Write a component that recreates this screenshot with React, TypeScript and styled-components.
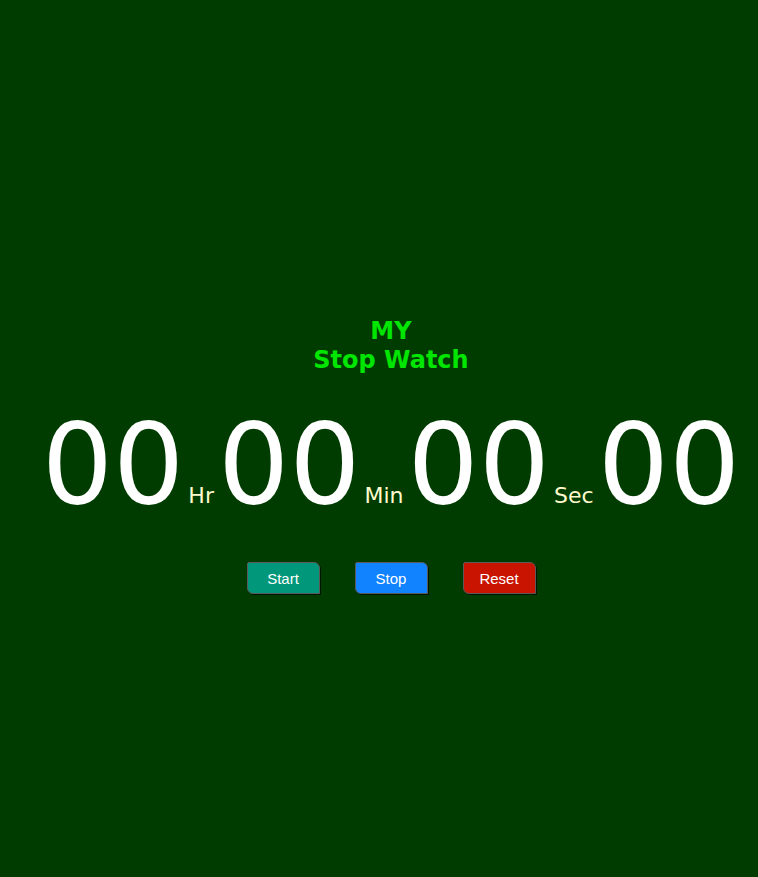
import React from "react";
import styled, { createGlobalStyle } from "styled-components";

const Global = createGlobalStyle`
  html, body {
    margin: 0;
    padding: 0;
    background: #003c00;
  }
  body {
    min-height: 877px;
    overflow: hidden;
  }
`;

const Page = styled.main`
  box-sizing: border-box;
  width: 100%;
  min-height: 877px;
  padding: 317px 0 0 24px;
  display: flex;
  flex-direction: column;
  align-items: center;
  font-family: "DejaVu Sans", Verdana, sans-serif;
`;

const Title = styled.h1`
  margin: 0;
  font-size: 24px;
  font-weight: bold;
  line-height: 29px;
  color: #00e600;
  text-align: center;
`;

const Display = styled.div`
  margin-top: 33px;
  display: flex;
  align-items: baseline;
  white-space: nowrap;
  line-height: 1;
`;

const Digits = styled.span`
  font-size: 112px;
  line-height: 1;
  color: #ffffff;
`;

const Unit = styled.span`
  font-size: 22px;
  line-height: 1;
  color: #fffacd;
  margin: 0 4px;
`;

const Controls = styled.div`
  margin-top: 42px;
  display: flex;
  gap: 35px;
`;

const Button = styled.button<{ $bg: string }>`
  width: 73px;
  height: 32px;
  padding: 0;
  background: ${(p) => p.$bg};
  color: #ffffff;
  font-family: "Liberation Sans", Arial, sans-serif;
  font-size: 15px;
  border: 1px solid #5a5a5a;
  border-radius: 2px 6px 0 6px;
  box-shadow: 1px 1px 0 #001500;
  cursor: pointer;
`;

export default function App() {
  return (
    <>
      <Global />
      <Page>
        <Title>
          MY
          <br />
          Stop Watch
        </Title>
        <Display>
          <Digits>00</Digits>
          <Unit>Hr</Unit>
          <Digits>00</Digits>
          <Unit>Min</Unit>
          <Digits>00</Digits>
          <Unit>Sec</Unit>
          <Digits>00</Digits>
        </Display>
        <Controls>
          <Button $bg="#00977a">Start</Button>
          <Button $bg="#1183ff">Stop</Button>
          <Button $bg="#c81400">Reset</Button>
        </Controls>
      </Page>
    </>
  );
}
